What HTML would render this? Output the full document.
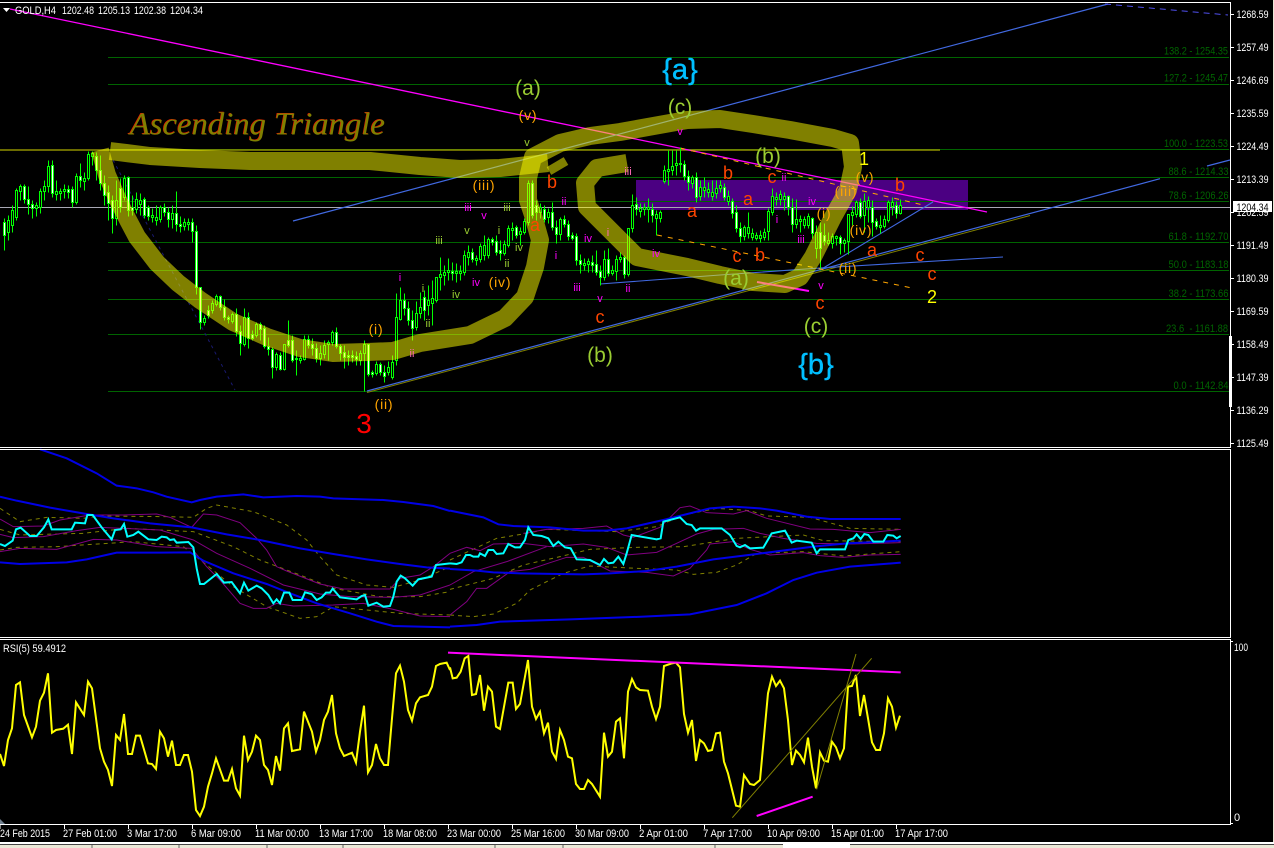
<!DOCTYPE html>
<html><head><meta charset="utf-8"><title>GOLD,H4</title>
<style>
html,body{margin:0;padding:0;background:#000;width:1274px;height:848px;overflow:hidden}
svg{display:block}
text{font-family:"Liberation Sans",sans-serif}
.ax{fill:#fff;font-size:11px}
.fb{fill:#006400;font-size:11px}
.o{fill:#ff4500;font-size:18px;text-anchor:middle}
.g{fill:#9acd32;font-size:21px;text-anchor:middle}
.s{fill:#ffa500;font-size:14px;text-anchor:middle;letter-spacing:.8px}
.m{fill:#ff00ff;font-size:11px;text-anchor:middle}
.l{fill:#9acd32;font-size:11px;text-anchor:middle}
.p{fill:#ff69b4;font-size:11px;text-anchor:middle}
.b{fill:#00bfff;font-size:29px;text-anchor:middle;stroke:#00bfff;stroke-width:.4}
.y{fill:#ffff00;font-size:18px;text-anchor:middle}
.d{fill:#fff;font-size:11px}
</style></head><body>
<svg width="1274" height="848" viewBox="0 0 1274 848" xmlns="http://www.w3.org/2000/svg">
<rect width="1274" height="848" fill="#000"/>
<rect x="636" y="180" width="332" height="30" fill="#4b0082"/>

<g stroke="#006400" stroke-width="1" shape-rendering="crispEdges">
<path d="M108 57.5H1229M108 84.5H1229M108 149.5H1229M108 177.5H1229M108 201.5H1229M108 242.5H1229M108 270.5H1229M108 299.5H1229M108 334.5H1229M108 391.5H1229" fill="none"/>
</g>
<path d="M0 150H940" stroke="#8f9000" stroke-width="1.6" fill="none"/>
<path d="M0 207.5H1230" stroke="#a8a8b4" stroke-width="1" fill="none"/>

<g fill="none">
<path d="M113 160L235 390" stroke="#191970" stroke-width="1" stroke-dasharray="3 4"/>
<path d="M10 9L987 212" stroke="#ff00ff" stroke-width="1.3"/>
<path d="M293 221L1108 4" stroke="#4169e1" stroke-width="1.2"/>
<path d="M1105 4L1228 15" stroke="#5050ee" stroke-width="1" stroke-dasharray="6 5"/>
<path d="M367 392.5L1030 215.5" stroke="#808000" stroke-width="1"/>
<path d="M367 391L1160 178.7M1207 166L1230 160" stroke="#4169e1" stroke-width="1.2"/>
<path d="M820 270L933 202" stroke="#4169e1" stroke-width="1.1"/>
<path d="M600 284L720 275L820 268L1003 257" stroke="#4169e1" stroke-width="1.1"/>
<path d="M657 235L912 288" stroke="#ffa500" stroke-width="1" stroke-dasharray="5 6"/>
<path d="M680 148L923 205" stroke="#ffa500" stroke-width="1" stroke-dasharray="5 6"/>
<path d="M757 282L809 291" stroke="#ff00ff" stroke-width="2"/>
</g>

<g transform="translate(.5 .5)" shape-rendering="crispEdges">
<path stroke="#00ff00" stroke-width="1" fill="none" d="M4 218V250M8 215V240M12 205V232M16 188V220M20 184V200M24 184V203M28 186V214M32 200V218M36 202V216M40 188V213M44 180V200M48 160V192M52 160V197M56 180V200M60 188V200M64 184V198M68 185V198M72 186V207M76 173V204M80 163V187M84 172V190M88 151V180M92 151V165M96 152V180M100 155V190M104 175V205M108 185V220M112 195V233M116 180V225M120 178V212M124 175V200M128 176V216M132 195V215M136 192V213M140 193V215M144 197V218M148 205V220M152 208V222M156 205V225M160 205V222M164 203V216M168 207V227M172 205V228M176 191V231M180 216V232M184 218V230M188 218V230M192 218V242M196 225V294M200 287V329M204 315V325M208 305V318M212 300V313M216 294V306M220 295V310M224 299V320M228 315V323M232 312V323M236 308V336M240 325V355M244 308V346M248 312V348M252 330V340M256 322V337M260 322V340M264 325V348M268 337V355M272 347V378M276 352V370M280 352V370M284 344V370M288 320V347M292 335V362M296 350V375M300 355V363M304 335V360M308 335V348M312 338V355M316 343V362M320 345V365M324 340V358M328 340V360M332 330V345M336 327V348M340 344V360M344 345V368M348 350V365M352 350V362M356 351V365M360 350V365M364 340V391M368 344V376M372 370V377M376 361V375M380 362V375M384 365V382M388 361V375M392 355V379M396 293V365M400 287V320M404 293V315M408 301V325M412 310V340M416 301V330M420 292V318M424 290V320M428 285V315M432 280V325M436 277V302M440 257V290M444 265V285M448 258V280M452 262V280M456 263V282M460 265V280M464 250V275M468 245V265M472 248V262M476 255V265M480 243V262M484 235V260M488 237V258M492 237V245M496 235V255M500 240V260M504 240V255M508 225V247M512 222V240M516 225V238M520 227V245M524 218V234M528 180V225M532 180V218M536 200V220M540 203V218M544 205V222M548 208V223M552 202V230M556 220V243M560 217V240M564 215V227M568 220V240M572 232V240M576 233V265M580 254V273M584 258V270M588 258V272M592 255V272M596 250V275M600 265V285M604 250V280M608 248V276M612 265V275M616 255V280M620 252V262M624 255V278M628 228V276M632 194V232M636 197V215M640 203V217M644 203V215M648 198V222M652 203V222M656 210V235M660 210V222M664 165V183M668 150V185M672 150V175M676 150V175M680 147V172M684 160V180M688 170V190M692 175V188M696 172V202M700 180V200M704 177V197M708 182V197M712 180V200M716 180V198M720 180V192M724 183V200M728 190V205M732 198V218M736 205V232M740 222V242M744 225V240M748 212V238M752 228V240M756 232V240M760 230V242M764 228V240M768 208V240M772 188V215M776 192V205M780 190V205M784 192V210M788 195V215M792 198V232M796 199V228M800 215V232M804 216V228M808 213V228M812 217V238M816 225V258M820 222V268M824 223V245M828 232V245M832 233V248M836 235V245M840 235V254M844 238V252M848 214V254M852 206V225M856 200V217M860 198V218M864 193V232M868 196V222M872 200V236M876 218V229M880 215V233M884 215V228M888 200V222M892 197V215M896 201V218M900 199V214"/>
<path stroke="#00ff00" stroke-width="1" fill="#000" d="M7 220h2V232h-2zM11 210h2V225h-2zM15 190h2V217h-2zM19 186h2V191h-2zM35 205h2V208h-2zM39 191h2V207h-2zM43 186h2V191h-2zM47 166h2V186h-2zM55 191h2V194h-2zM59 191h2V193h-2zM63 189h2V191h-2zM75 176h2V202h-2zM83 178h2V181h-2zM87 154h2V178h-2zM91 153h2V156h-2zM115 200h2V218h-2zM123 178h2V197h-2zM135 199h2V209h-2zM139 200h2V204h-2zM151 215h2V217h-2zM155 217h2V220h-2zM159 207h2V219h-2zM171 213h2V219h-2zM183 222h2V226h-2zM187 222h2V224h-2zM203 318h2V322h-2zM211 303h2V310h-2zM215 296h2V304h-2zM231 314h2V321h-2zM243 317h2V344h-2zM255 324h2V335h-2zM275 354h2V367h-2zM283 344h2V369h-2zM295 358h2V359h-2zM299 358h2V360h-2zM303 339h2V359h-2zM319 353h2V358h-2zM323 345h2V354h-2zM327 342h2V344h-2zM331 332h2V342h-2zM359 353h2V360h-2zM363 344h2V353h-2zM375 364h2V373h-2zM387 367h2V372h-2zM391 362h2V377h-2zM395 317h2V360h-2zM399 300h2V319h-2zM415 313h2V327h-2zM419 307h2V313h-2zM427 300h2V305h-2zM431 298h2V303h-2zM435 277h2V300h-2zM439 274h2V277h-2zM443 272h2V275h-2zM447 270h2V272h-2zM455 271h2V273h-2zM459 271h2V273h-2zM463 255h2V272h-2zM467 252h2V257h-2zM475 258h2V260h-2zM479 246h2V259h-2zM483 245h2V255h-2zM487 239h2V255h-2zM503 244h2V253h-2zM507 228h2V245h-2zM511 228h2V230h-2zM519 231h2V234h-2zM523 221h2V232h-2zM527 183h2V222h-2zM539 207h2V212h-2zM547 212h2V217h-2zM559 219h2V234h-2zM583 263h2V265h-2zM587 261h2V264h-2zM603 259h2V277h-2zM611 270h2V273h-2zM615 259h2V271h-2zM619 257h2V259h-2zM627 228h2V274h-2zM631 205h2V228h-2zM639 208h2V211h-2zM643 207h2V209h-2zM647 207h2V209h-2zM655 214h2V218h-2zM659 212h2V218h-2zM663 170h2V181h-2zM667 169h2V171h-2zM671 166h2V170h-2zM675 163h2V165h-2zM679 163h2V164h-2zM691 177h2V183h-2zM699 187h2V196h-2zM703 187h2V190h-2zM707 189h2V192h-2zM711 192h2V196h-2zM715 188h2V193h-2zM719 185h2V188h-2zM727 196h2V201h-2zM743 227h2V236h-2zM747 227h2V233h-2zM751 233h2V237h-2zM755 235h2V238h-2zM759 235h2V238h-2zM763 232h2V237h-2zM767 211h2V231h-2zM771 196h2V212h-2zM775 197h2V199h-2zM779 194h2V199h-2zM783 196h2V199h-2zM795 219h2V224h-2zM799 219h2V221h-2zM803 219h2V225h-2zM807 216h2V225h-2zM815 232h2V248h-2zM827 240h2V243h-2zM831 236h2V243h-2zM835 236h2V238h-2zM843 240h2V243h-2zM847 214h2V241h-2zM851 212h2V215h-2zM855 202h2V214h-2zM863 201h2V215h-2zM867 200h2V207h-2zM879 225h2V227h-2zM883 219h2V226h-2zM887 202h2V220h-2zM891 202h2V206h-2zM899 205h2V213h-2z"/>
<path stroke="#00ff00" stroke-width="1" fill="#fff" d="M3 222h2V235h-2zM23 186h2V199h-2zM27 199h2V204h-2zM31 204h2V208h-2zM51 165h2V193h-2zM67 189h2V192h-2zM71 189h2V202h-2zM79 176h2V180h-2zM95 156h2V170h-2zM99 170h2V183h-2zM103 183h2V195h-2zM107 192h2V203h-2zM111 200h2V218h-2zM119 188h2V207h-2zM127 177h2V210h-2zM131 207h2V210h-2zM143 199h2V215h-2zM147 207h2V216h-2zM163 207h2V212h-2zM167 212h2V219h-2zM175 213h2V224h-2zM179 224h2V226h-2zM191 222h2V231h-2zM195 231h2V287h-2zM199 287h2V322h-2zM207 310h2V315h-2zM219 296h2V307h-2zM223 307h2V317h-2zM227 317h2V319h-2zM235 314h2V331h-2zM239 331h2V343h-2zM247 317h2V338h-2zM251 334h2V338h-2zM259 324h2V329h-2zM263 328h2V346h-2zM267 346h2V349h-2zM271 349h2V367h-2zM279 355h2V369h-2zM287 340h2V345h-2zM291 340h2V360h-2zM307 339h2V345h-2zM311 344h2V348h-2zM315 348h2V358h-2zM335 332h2V346h-2zM339 346h2V353h-2zM343 352h2V357h-2zM347 355h2V357h-2zM351 355h2V357h-2zM355 356h2V359h-2zM367 344h2V374h-2zM371 372h2V374h-2zM379 364h2V372h-2zM383 372h2V376h-2zM403 300h2V308h-2zM407 308h2V320h-2zM411 320h2V328h-2zM423 297h2V310h-2zM451 271h2V273h-2zM471 252h2V259h-2zM491 239h2V242h-2zM495 241h2V252h-2zM499 250h2V253h-2zM515 227h2V235h-2zM531 183h2V215h-2zM535 205h2V212h-2zM543 209h2V219h-2zM551 212h2V227h-2zM555 227h2V234h-2zM563 219h2V224h-2zM567 224h2V236h-2zM571 235h2V238h-2zM575 236h2V260h-2zM579 260h2V264h-2zM591 262h2V265h-2zM595 264h2V272h-2zM599 271h2V277h-2zM607 259h2V273h-2zM623 257h2V274h-2zM635 204h2V209h-2zM651 209h2V215h-2zM683 164h2V176h-2zM687 176h2V182h-2zM695 177h2V197h-2zM723 187h2V197h-2zM731 201h2V213h-2zM735 212h2V228h-2zM739 228h2V236h-2zM787 196h2V207h-2zM791 207h2V224h-2zM811 218h2V233h-2zM819 232h2V248h-2zM823 235h2V241h-2zM839 237h2V243h-2zM859 202h2V216h-2zM871 207h2V222h-2zM875 221h2V226h-2zM895 205h2V213h-2z"/>
</g>

<g fill="none" stroke="#ffff00" stroke-linejoin="round" stroke-linecap="butt" opacity=".5">
<path stroke-width="18" d="M110 151L150 156L200 159L250 161L370 161L420 166L460 169L500 168L548 163"/>
</g>
<g fill="none" stroke="#ffff00" stroke-linejoin="round" stroke-linecap="butt" opacity=".5">
<path stroke-width="18" d="M100 150L107 175L118 200L128 220L137 237L157 263L178 283L200 300L233 322L267 337L300 348L333 353L367 352L393 351L420 343L470 335L505 318L525 297L535 267L540 240L533 215L528 200L528 178L533 157L560 143L590 136L620 132L687 120L720 119L753 124L790 130L833 138L850 143L853 167L848 190L833 217L813 257L800 277L785 284L753 282L720 275L687 267L637 257L607 227L587 207L585 183L597 168L627 163"/>
<path stroke-width="9" d="M549 171L566 161"/>
</g>

<g fill="none" stroke-width="6" transform="translate(0 440) scale(.33333)" stroke-linejoin="miter">
<g stroke="#808000" stroke-width="3" stroke-dasharray="12 12">
<path d="M0 205L60 245L140 232L250 235L300 228L500 230L580 232L620 205L650 195L760 215L860 255L920 300L960 350L1010 405L1100 435L1180 442L1260 420L1350 380"/>
<path d="M0 268L60 285L250 280L380 265L580 275L700 320L780 360L900 405L1000 445L1140 470L1260 470L1350 455"/>
<path d="M0 330L50 322L170 320L400 305L550 320L620 375L700 440L800 500L900 535L950 530L1000 500L1200 520L1350 525"/>
<g transform="translate(1350 0)">
<path d="M0 360L140 295L220 282L290 268L500 275L620 260L700 225L800 205L900 212L950 228L1080 232L1200 265L1352 268"/>
<path d="M0 448L130 415L220 375L330 350L420 328L560 322L700 320L860 295L1060 285L1120 302L1352 305"/>
<path d="M0 525L70 530L130 522L200 490L240 450L340 400L420 378L560 385L680 390L730 403L800 397L860 375L920 340L1060 335L1180 348L1352 335"/>
</g></g>
<g stroke="#800080" stroke-width="3">
<path d="M0 237L40 260L130 258L180 240L270 225L370 225L470 222L510 232L575 262L610 222L650 225L720 248L770 295L800 330L830 380L860 393L960 432L1030 447L1170 447L1200 415L1260 405L1300 380L1350 340"/>
<path d="M0 283L40 293L130 290L230 272L300 262L480 270L580 300L650 340L750 385L850 435L960 462L1050 470L1180 472L1260 465L1350 435"/>
<path d="M0 335L60 325L170 328L280 298L350 300L470 320L575 325L620 380L660 420L720 490L760 505L800 505L830 490L880 498L1000 495L1090 490L1180 508L1260 528L1350 530"/>
<g transform="translate(1350 0)">
<path d="M0 340L50 322L90 332L130 312L220 310L300 320L400 312L470 322L530 345L620 337L680 310L740 282L790 268L880 265L930 280L1000 295L1100 310L1200 312L1352 308"/>
<path d="M0 435L70 395L170 365L290 320"/>
<path d="M0 525L50 485L80 445L110 445L180 395L240 388L300 368L350 352L400 352L480 393L590 397L670 408L720 385L770 330L780 312L850 305L900 328L960 345L1060 338L1110 347L1180 352L1260 345L1352 343"/>
<path d="M220 280L290 268L400 265L470 258L520 285L550 292L630 262L690 203L720 198L770 218L850 222L890 212L950 235L1080 267L1150 268L1260 278L1352 268"/>
</g></g>
<g stroke="#0000e6" stroke-width="6">
<path d="M120 28L200 55L290 100L350 137L410 145L460 157L500 170L575 187L600 180L650 170L730 163L790 172L890 168L960 170L1000 175L1150 180L1210 186L1300 198L1350 213"/>
<path d="M0 170L50 182L150 203L260 222L340 235L450 250L575 262L680 283L780 300L900 325L1000 342L1100 358L1200 372L1280 382L1350 386"/>
<path d="M0 367L60 372L200 367L260 358L350 338L480 338L570 337L610 362L700 400L800 432L870 460L950 490L1050 520L1130 545L1180 558L1350 562"/>
<g transform="translate(1350 0)">
<path d="M0 212L50 222L100 232L145 253L190 258L300 262L400 272L470 272L530 265L640 240L700 225L780 205L850 200L930 205L980 212L1070 230L1140 237L1352 237"/>
<path d="M0 387L80 392L130 397L210 400L400 403L480 400L590 393L680 380L790 358L920 342L1090 320L1190 310L1352 302"/>
<path d="M0 560L80 555L150 545L360 538L580 530L720 523L860 495L950 460L1030 420L1100 398L1200 380L1352 368"/>
</g></g>
<g stroke="#00ffff" stroke-width="6">
<path d="M0 312L15 318L38 302L48 268L62 263L90 288L110 288L132 262L145 238L155 268L215 268L225 248L255 250L262 225L278 225L305 262L335 298L345 270L362 268L372 252L382 290L400 285L415 275L445 298L470 300L485 290L500 292L510 300L522 298L530 308L565 306L580 322L590 385L600 432L612 432L650 402L672 428L695 426L720 460L732 428L745 452L770 437L785 445L805 465L820 490L830 478L840 490L852 458L868 458L878 480L905 480L915 457L935 462L950 480L965 472L978 458L990 458L998 446L1020 472L1070 478L1085 468L1095 465L1105 497L1130 488L1150 500L1170 498L1180 470L1190 425L1202 407L1215 415L1238 437L1255 418L1295 410L1308 375L1350 370"/>
<path transform="translate(1350 0)" d="M0 370L20 372L35 367L48 345L60 345L70 350L85 350L90 340L105 348L115 330L130 330L140 342L160 340L175 312L195 322L210 322L225 300L235 262L250 285L275 288L295 295L310 318L325 305L345 322L362 325L380 358L420 360L450 375L462 357L475 370L490 368L505 350L520 372L530 340L545 285L620 298L632 295L640 245L690 232L710 252L725 255L738 272L750 265L815 265L840 285L860 318L870 322L885 315L900 325L940 323L965 280L1005 272L1025 308L1040 302L1085 308L1100 340L1110 328L1185 328L1195 300L1210 295L1220 283L1232 297L1243 282L1255 285L1270 305L1300 305L1312 285L1330 287L1340 295L1352 288"/>
</g>
</g>

<g fill="none" transform="translate(0 630) scale(.33333)">
<polyline stroke="#ffff00" stroke-width="6" points="0,372 12,408 24,330 36,295 48,165 60,157 72,255 96,322 108,290 120,212 132,188 144,130 156,308 168,300 190,296 204,284 216,372 228,217 252,255 264,155 276,175 300,355 312,395 324,420 336,468 348,315 360,330 372,252 384,372 396,372 408,317 420,317 444,400 456,402 468,417 480,305 492,325 504,380 516,332 528,405 540,405 552,375 564,375 576,425 588,540 600,558 612,530 624,470 636,430 648,385 672,452 684,452 696,417 708,475 720,497 732,317 744,390 756,365 768,317 780,330 792,405 804,420 816,465 828,378 840,422 852,295 864,280 876,363 900,358 912,245 936,305 948,365 960,330 972,270 984,245 996,195 1008,310 1020,355 1032,378 1056,368 1068,398 1080,305 1092,227 1104,427 1116,405 1128,342 1140,385 1152,405 1164,405 1176,265 1188,130 1200,107 1212,155 1224,240 1236,272 1248,220 1260,202 1284,195 1296,170 1308,108 1320,102 1340,98 1350,120"/>
<g transform="translate(1350 0)">
<polyline stroke="#ffff00" stroke-width="6" points="0,112 8,145 20,143 32,125 44,85 55,78 66,195 78,192 90,135 102,242 114,170 126,185 138,290 150,297 175,158 188,158 198,237 210,222 234,90 246,230 258,267 270,245 282,310 294,278 306,365 318,387 330,300 342,330 354,380 366,385 378,462 390,477 402,477 414,450 426,462 450,500 462,308 474,380 486,365 498,275 510,265 522,385 534,185 546,147 558,172 570,180 594,182 606,230 618,267 630,230 642,108 666,100 678,98 690,112 702,252 714,308 726,270 738,393 750,330 762,340 774,363 786,360 798,310 810,308 822,395 834,430 858,527 870,530 882,435 900,462 912,465 930,450 954,190 966,140 978,168 990,152 1002,175 1014,270 1026,405 1038,362 1050,375 1062,397 1074,323 1086,410 1098,475 1110,367 1122,392 1134,395 1146,335 1158,352 1170,385 1182,355 1194,170 1206,168 1218,135 1230,258 1242,195 1254,265 1266,337 1278,360 1290,360 1302,310 1314,205 1326,230 1338,293 1350,257"/>
<path stroke="#ff00ff" stroke-width="6" d="M-6 68L1352 127"/>
<path stroke="#ff00ff" stroke-width="6" d="M920 558L1088 500"/>
<path stroke="#808000" stroke-width="3" d="M847 563L1265 85M1100 478L1218 72"/>
</g>
</g>

<g fill="none" stroke="#fff" stroke-width="1" shape-rendering="crispEdges">
<path d="M0 2.5H1230.5M1230.5 2V447M0 447.5H1231M0 449.5H1231M1230.5 449V637M0 637.5H1231M0 639.5H1231M1230.5 639V824.5M0 824.5H1231"/>
<path d="M1231 14.5h3M1231 47.5h3M1231 80.5h3M1231 113.5h3M1231 146.5h3M1231 179.5h3M1231 212.5h3M1231 245.5h3M1231 278.5h3M1231 311.5h3M1231 344.5h3M1231 377.5h3M1231 410.5h3M1231 443.5h3M1231 641.5h2M1231 823.5h2"/>
<path d="M0 825V829M64.5 825V829M128.5 825V829M192.5 825V829M256.5 825V829M320.5 825V829M384.5 825V829M448.5 825V829M512.5 825V829M576.5 825V829M640.5 825V829M704.5 825V829M768.5 825V829M832.5 825V829M896.5 825V829"/>
</g>
<rect x="1229" y="336" width="3" height="71" fill="#fff"/>
<path d="M0 819L5 824H0Z" fill="#708090"/>

<path d="M3 8H10L6.5 12Z" fill="#fff"/>
<g class="ax">
<text x="15" y="14" textLength="41" lengthAdjust="spacingAndGlyphs" class="ax">GOLD,H4</text>
<text x="62" y="14" textLength="32" lengthAdjust="spacingAndGlyphs" class="ax">1202.48</text>
<text x="98" y="14" textLength="32" lengthAdjust="spacingAndGlyphs" class="ax">1205.13</text>
<text x="134" y="14" textLength="32" lengthAdjust="spacingAndGlyphs" class="ax">1202.38</text>
<text x="170" y="14" textLength="33" lengthAdjust="spacingAndGlyphs" class="ax">1204.34</text>
<text x="3" y="652" textLength="63" lengthAdjust="spacingAndGlyphs" class="ax">RSI(5) 59.4912</text>
</g>

<text x="129.4" y="133.8" font-size="32" textLength="255" lengthAdjust="spacingAndGlyphs" style="font-family:'Liberation Serif',serif;font-style:italic" fill="#e02000">Ascending Triangle</text>
<text x="130" y="134.6" font-size="32" textLength="255" lengthAdjust="spacingAndGlyphs" style="font-family:'Liberation Serif',serif;font-style:italic" fill="#808000">Ascending Triangle</text>

<g>
<text class="ax" x="1236.5" y="18" textLength="32" lengthAdjust="spacingAndGlyphs">1268.59</text>
<text class="ax" x="1236.5" y="51" textLength="32" lengthAdjust="spacingAndGlyphs">1257.49</text>
<text class="ax" x="1236.5" y="84" textLength="32" lengthAdjust="spacingAndGlyphs">1246.69</text>
<text class="ax" x="1236.5" y="117" textLength="32" lengthAdjust="spacingAndGlyphs">1235.59</text>
<text class="ax" x="1236.5" y="150" textLength="32" lengthAdjust="spacingAndGlyphs">1224.49</text>
<text class="ax" x="1236.5" y="183" textLength="32" lengthAdjust="spacingAndGlyphs">1213.39</text>
<text class="ax" x="1236.5" y="216" textLength="32" lengthAdjust="spacingAndGlyphs">1202.59</text>
<text class="ax" x="1236.5" y="249" textLength="32" lengthAdjust="spacingAndGlyphs">1191.49</text>
<text class="ax" x="1236.5" y="282" textLength="32" lengthAdjust="spacingAndGlyphs">1180.39</text>
<text class="ax" x="1236.5" y="315" textLength="32" lengthAdjust="spacingAndGlyphs">1169.59</text>
<text class="ax" x="1236.5" y="348" textLength="32" lengthAdjust="spacingAndGlyphs">1158.49</text>
<text class="ax" x="1236.5" y="381" textLength="32" lengthAdjust="spacingAndGlyphs">1147.39</text>
<text class="ax" x="1236.5" y="414" textLength="32" lengthAdjust="spacingAndGlyphs">1136.29</text>
<text class="ax" x="1236.5" y="447" textLength="32" lengthAdjust="spacingAndGlyphs">1125.49</text>
<text class="ax" x="1234" y="651" textLength="14" lengthAdjust="spacingAndGlyphs">100</text>
<text class="ax" x="1234" y="821">0</text>
</g>
<rect x="1233" y="201" width="39" height="11" fill="#fff"/>
<text x="1236.5" y="211" font-size="11" fill="#000" textLength="32" lengthAdjust="spacingAndGlyphs">1204.34</text>

<g>
<text class="fb" x="1164" y="54.5" textLength="64" lengthAdjust="spacingAndGlyphs">138.2 - 1254.35</text>
<text class="fb" x="1164" y="81.5" textLength="64" lengthAdjust="spacingAndGlyphs">127.2 - 1245.47</text>
<text class="fb" x="1164" y="147" textLength="64" lengthAdjust="spacingAndGlyphs">100.0 - 1223.53</text>
<text class="fb" x="1168.5" y="175" textLength="60" lengthAdjust="spacingAndGlyphs">88.6 - 1214.33</text>
<text class="fb" x="1168.5" y="199" textLength="60" lengthAdjust="spacingAndGlyphs">78.6 - 1206.26</text>
<text class="fb" x="1168.5" y="240" textLength="60" lengthAdjust="spacingAndGlyphs">61.8 - 1192.70</text>
<text class="fb" x="1168.5" y="268" textLength="60" lengthAdjust="spacingAndGlyphs">50.0 - 1183.18</text>
<text class="fb" x="1168.5" y="297" textLength="60" lengthAdjust="spacingAndGlyphs">38.2 - 1173.66</text>
<text class="fb" x="1166" y="332" textLength="62" lengthAdjust="spacingAndGlyphs" xml:space="preserve">23.6  - 1161.88</text>
<text class="fb" x="1173.5" y="389" textLength="55" lengthAdjust="spacingAndGlyphs">0.0 - 1142.84</text>
</g>

<g>
<text class="d" x="0" y="837" textLength="50" lengthAdjust="spacingAndGlyphs">24 Feb 2015</text>
<text class="d" x="63" y="837" textLength="54" lengthAdjust="spacingAndGlyphs">27 Feb 01:00</text>
<text class="d" x="127" y="837" textLength="50" lengthAdjust="spacingAndGlyphs">3 Mar 17:00</text>
<text class="d" x="191" y="837" textLength="50" lengthAdjust="spacingAndGlyphs">6 Mar 09:00</text>
<text class="d" x="255" y="837" textLength="54" lengthAdjust="spacingAndGlyphs">11 Mar 00:00</text>
<text class="d" x="319" y="837" textLength="54" lengthAdjust="spacingAndGlyphs">13 Mar 17:00</text>
<text class="d" x="383" y="837" textLength="54" lengthAdjust="spacingAndGlyphs">18 Mar 08:00</text>
<text class="d" x="447" y="837" textLength="54" lengthAdjust="spacingAndGlyphs">23 Mar 00:00</text>
<text class="d" x="511" y="837" textLength="54" lengthAdjust="spacingAndGlyphs">25 Mar 16:00</text>
<text class="d" x="575" y="837" textLength="54" lengthAdjust="spacingAndGlyphs">30 Mar 09:00</text>
<text class="d" x="639" y="837" textLength="49" lengthAdjust="spacingAndGlyphs">2 Apr 01:00</text>
<text class="d" x="703" y="837" textLength="49" lengthAdjust="spacingAndGlyphs">7 Apr 17:00</text>
<text class="d" x="767" y="837" textLength="53" lengthAdjust="spacingAndGlyphs">10 Apr 09:00</text>
<text class="d" x="831" y="837" textLength="53" lengthAdjust="spacingAndGlyphs">15 Apr 01:00</text>
<text class="d" x="895" y="837" textLength="53" lengthAdjust="spacingAndGlyphs">17 Apr 17:00</text>
</g>

<g>
<text class="b" x="680" y="79">{a}</text>
<text class="b" x="816" y="374">{b}</text>
<text class="g" x="528" y="95">(a)</text>
<text class="g" x="680" y="114">(c)</text>
<text class="g" x="768" y="163">(b)</text>
<text class="g" x="736" y="285">(a)</text>
<text class="g" x="816" y="333">(c)</text>
<text class="g" x="600" y="362">(b)</text>
<text x="364" y="433" font-size="28" fill="#ff0000" text-anchor="middle">3</text>
<text class="y" x="864" y="165">1</text>
<text class="y" x="932" y="303">2</text>

<text class="o" x="552" y="188">b</text>
<text class="o" x="535" y="231">a</text>
<text class="o" x="692" y="217">a</text>
<text class="o" x="728" y="179">b</text>
<text class="o" x="772" y="183">c</text>
<text class="o" x="748" y="205">a</text>
<text class="o" x="737" y="262">c</text>
<text class="o" x="760" y="261">b</text>
<text class="o" x="600" y="323">c</text>
<text class="o" x="900" y="191">b</text>
<text class="o" x="872" y="256">a</text>
<text class="o" x="920" y="261">c</text>
<text class="o" x="932" y="280">c</text>
<text class="o" x="820" y="309">c</text>

<text class="s" x="528" y="120">(v)</text>
<text class="s" x="484" y="190">(iii)</text>
<text class="s" x="500" y="287">(iv)</text>
<text class="s" x="376" y="334">(i)</text>
<text class="s" x="384" y="409">(ii)</text>
<text class="s" x="865" y="182">(v)</text>
<text class="s" x="846" y="196">(iii)</text>
<text class="s" x="824" y="218">(i)</text>
<text class="s" x="861" y="235">(iv)</text>
<text class="s" x="848" y="273">(ii)</text>

<text class="m" x="468" y="211">iii</text>
<text class="m" x="484" y="219">v</text>
<text class="m" x="564" y="205">ii</text>
<text class="m" x="588" y="242">iv</text>
<text class="p" x="608" y="236">i</text>
<text class="m" x="556" y="259">i</text>
<text class="m" x="656" y="257">iv</text>
<text class="m" x="577" y="291">iii</text>
<text class="m" x="628" y="292">ii</text>
<text class="m" x="476" y="286">iv</text>
<text class="m" x="600" y="302">v</text>
<text class="p" x="628" y="175">iii</text>
<text class="m" x="680" y="135">v</text>
<text class="m" x="784" y="181">ii</text>
<text class="m" x="777" y="223">i</text>
<text class="m" x="812" y="205">iv</text>
<text class="m" x="801" y="243">iii</text>
<text class="m" x="821" y="289">v</text>
<text class="p" x="412" y="357">ii</text>
<text class="m" x="400" y="281">i</text>

<text class="l" x="527" y="146">v</text>
<text class="l" x="507" y="211">iii</text>
<text class="l" x="467" y="234">v</text>
<text class="l" x="499" y="234">i</text>
<text class="l" x="439" y="244">iii</text>
<text class="l" x="519" y="251">iv</text>
<text class="l" x="507" y="267">ii</text>
<text class="l" x="423" y="292">i</text>
<text class="l" x="456" y="298">iv</text>
<text class="l" x="428" y="327">ii</text>
</g>

<rect x="1273" y="0" width="1" height="848" fill="#ece9d8"/>
<rect x="0" y="842" width="1274" height="2" fill="#fff"/>
<rect x="0" y="844" width="1274" height="4" fill="#ece9d8"/>
<path d="M0 844.5H783M850 844.5H1274" stroke="#444" stroke-width="1" fill="none"/>
<rect x="783" y="844" width="67" height="4" fill="#fff"/>
<path d="M92 845v3M179 845v3M267 845v3M343 845v3M495 845v3M563 845v3M715 845v3" stroke="#666" stroke-width="1"/>
</svg>
</body></html>
